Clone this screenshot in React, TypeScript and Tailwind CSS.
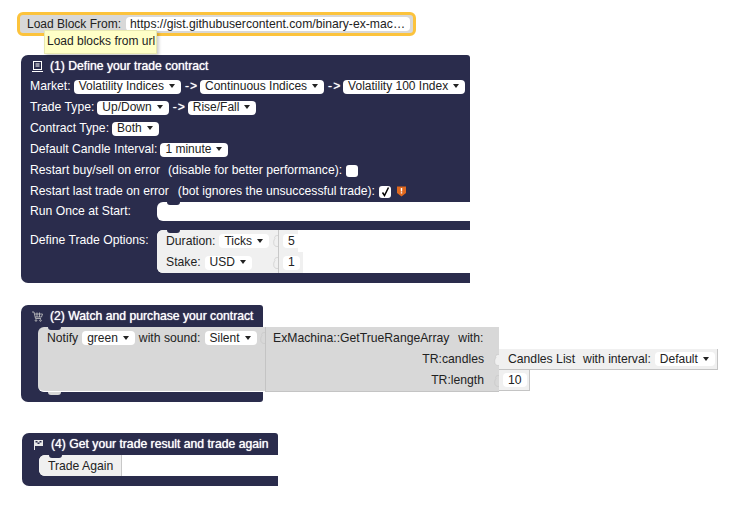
import type { ReactNode } from 'react'

const navy = 'bg-[#2a2c4c]'

function Caret() {
  return <span className="ml-[5px] inline-block h-0 w-0 border-x-[3.5px] border-t-[4px] border-x-transparent border-t-[#222]" />
}

function Dropdown({ label, className = '' }: { label: string; className?: string }) {
  return (
    <span className={`inline-flex h-[14px] shrink-0 items-center rounded-[4px] bg-white pb-[1px] pl-[5px] pr-[6px] text-[12px] text-[#222] ${className}`}>
      {label}
      <Caret />
    </span>
  )
}

function NumberField({ value }: { value: string }) {
  return <span className="inline-flex h-[14px] items-center rounded-[4px] bg-white px-[5px] text-[#222]">{value}</span>
}

// the little notch every statement block has on its top edge
function TopNotch() {
  return <span className={`absolute top-0 left-[10px] h-[3px] w-[13px] rounded-b-[6px] ${navy}`} />
}

// value input socket, the puzzle tab drawn at the right side of a block
function Socket({ color = '#f0f0f0' }: { color?: string }) {
  return (
    <svg width="5" height="12" viewBox="0 0 5 12" className="shrink-0">
      <path d="M5 0.5 C2 0.5 1 2 2 3.5 C0.5 5 0.5 8 1 9.5 C2 11.5 3 11.5 5 11.5" fill={color} stroke="#c6c6c6" strokeWidth="0.6" />
    </svg>
  )
}

function Row({ children }: { children: ReactNode }) {
  return <div className="flex h-[21px] items-center whitespace-nowrap pl-[9px] text-white">{children}</div>
}

function Header({ icon, title }: { icon: ReactNode; title: string }) {
  return (
    <div className="flex h-[21px] items-center whitespace-nowrap pl-[11px] pt-[1px] text-white [text-shadow:0_0_1px_#fff]">
      <span className="flex w-[18px] shrink-0 items-center">{icon}</span>
      {title}
    </div>
  )
}

function ListIcon() {
  return (
    <svg width="11" height="11" viewBox="0 0 11 11" fill="none" stroke="#fff" strokeWidth="1">
      <rect x="1.5" y="0.5" width="8" height="8" />
      <path d="M3.5 3h4M3.5 5h4M0 10.5h11" />
    </svg>
  )
}

function CartIcon() {
  return (
    <svg width="11" height="11" viewBox="0 0 11 11" fill="none" stroke="#c8c8c8" strokeWidth="0.8">
      <path d="M0 1h2l1.5 6.5h5.5M2.5 3h8L9.5 6H3.2M5 1.5v4.5M7.5 1.5v4.5" />
      <circle cx="4" cy="9.5" r="0.8" />
      <circle cx="8.5" cy="9.5" r="0.8" />
    </svg>
  )
}

function FlagIcon() {
  return (
    <svg width="11" height="11" viewBox="0 0 11 11">
      <path d="M1 1h9v6H2v4H1z" fill="#e8e8e8" />
      <path d="M2.5 2h2v1.5h-2zM6.5 2h2v1.5h-2zM4.5 3.5h2V5h-2z" fill="#2a2c4c" />
    </svg>
  )
}

function Checkbox({ checked = false }: { checked?: boolean }) {
  return (
    <span className="ml-[4px] flex h-[12px] w-[12px] items-center justify-center rounded-[3px] bg-white">
      {checked && (
        <svg width="9" height="10" viewBox="0 0 9 10" fill="none" stroke="#000" strokeWidth="1.5">
          <path d="M1.5 5.5 L3.5 8.5 L7.5 0.5" />
        </svg>
      )}
    </span>
  )
}

function Warning() {
  return (
    <svg width="9" height="11" viewBox="0 0 9 11" className="ml-[6px]">
      <path d="M0 0.5h9v6.5L4.5 10.5 0 7z" fill="#e0691f" />
      <path d="M3.8 2h1.4v3.5H3.8zM3.8 6.2h1.4v1.3H3.8z" fill="#fff" />
    </svg>
  )
}

function Arrow() {
  return <span className="ml-[4px] mr-[2px] w-[13px] tracking-[1px] [text-shadow:0_0_1px_#fff]">-&gt;</span>
}

function DefineBlock() {
  return (
    <div className={`w-[449px] rounded-l-[7px] rounded-tr-[3px] ${navy} pb-[10px]`}>
      <Header icon={<ListIcon />} title="(1) Define your trade contract" />
      <Row>
        Market:
        <Dropdown label="Volatility Indices" className="ml-[3px]" />
        <Arrow />
        <Dropdown label="Continuous Indices" />
        <Arrow />
        <Dropdown label="Volatility 100 Index" />
      </Row>
      <Row>
        Trade Type:
        <Dropdown label="Up/Down" className="ml-[3px]" />
        <Arrow />
        <Dropdown label="Rise/Fall" />
      </Row>
      <Row>
        Contract Type:
        <Dropdown label="Both" className="ml-[3px]" />
      </Row>
      <Row>
        Default Candle Interval:
        <Dropdown label="1 minute" className="ml-[3px]" />
      </Row>
      <Row>
        Restart buy/sell on error
        <span className="ml-[8px]">(disable for better performance):</span>
        <Checkbox />
      </Row>
      <Row>
        Restart last trade on error
        <span className="ml-[9px]">(bot ignores the unsuccessful trade):</span>
        <Checkbox checked />
        <Warning />
      </Row>
      <div className="flex h-[19px] items-center text-white">
        <span className="w-[136px] pl-[9px]">Run Once at Start:</span>
        <div className="relative h-full flex-1 rounded-l-[6px] bg-white">
          <TopNotch />
        </div>
      </div>
      <div className="mt-[9px] flex h-[43px] text-white">
        <span className="w-[136px] pl-[9px] pt-[4px]">Define Trade Options:</span>
        <div className="flex flex-1 rounded-l-[6px] bg-white text-[#222]">
          <div className="relative flex w-[121px] flex-col rounded-l-[6px] bg-[#f0f0f0] pl-[9px]">
            <TopNotch />
            <div className="flex h-[22px] items-center">
              Duration:
              <Dropdown label="Ticks" className="ml-[4px]" />
              <span className="ml-auto"><Socket /></span>
            </div>
            <div className="flex h-[21px] items-center">
              Stake:
              <Dropdown label="USD" className="ml-[4px]" />
              <span className="ml-auto"><Socket /></span>
            </div>
          </div>
          <div className="flex flex-col items-start">
            <div className="flex h-[22px] w-[20px] items-center border-l border-[#c8c8c8] bg-[#f0f0f0] pl-[4px]">
              <NumberField value="5" />
            </div>
            <div className="flex h-[21px] w-[25px] items-center border-l border-[#c8c8c8] bg-[#f0f0f0] pl-[4px]">
              <NumberField value="1" />
            </div>
          </div>
        </div>
      </div>
    </div>
  )
}

function WatchBlock() {
  return (
    <div className={`mt-[22px] w-[242px] rounded-l-[7px] rounded-tr-[3px] rounded-br-[3px] ${navy} pb-[10px]`}>
      <Header icon={<CartIcon />} title="(2) Watch and purchase your contract" />
      <div className="ml-[17px] mt-[1px] flex h-[65px] w-max text-[#222]">
        <div className="relative flex w-[227px] items-start rounded-l-[6px] border-b border-white bg-[#d8d8d8] pl-[9px]">
          <TopNotch />
          <span className="absolute -bottom-[4px] left-[10px] h-[3px] w-[13px] rounded-b-[6px] bg-[#d8d8d8]" />
          <div className="flex h-[22px] w-full items-center whitespace-nowrap">
            Notify
            <Dropdown label="green" className="ml-[4px]" />
            <span className="ml-[4px]">with sound:</span>
            <Dropdown label="Silent" className="ml-[4px]" />
            <span className="ml-auto"><Socket color="#d8d8d8" /></span>
          </div>
        </div>
        <div className="flex w-[234px] flex-col border-l border-b border-[#c4c4c4] bg-[#d8d8d8]">
          <div className="flex h-[22px] items-center whitespace-nowrap pl-[7px]">
            ExMachina::GetTrueRangeArray
            <span className="ml-[9px]">with:</span>
          </div>
          <div className="flex h-[21px] items-center justify-end whitespace-nowrap pr-[10px]">
            TR:candles
            <span className="ml-[10px] -mr-[10px]"><Socket /></span>
          </div>
          <div className="flex h-[21px] items-center justify-end whitespace-nowrap pr-[10px]">
            TR:length
            <span className="ml-[10px] -mr-[10px]"><Socket color="#d8d8d8" /></span>
          </div>
        </div>
        <div className="flex flex-col items-start pt-[22px]">
          <div className="flex h-[21px] w-[219px] items-center whitespace-nowrap border-b border-r border-[#c4c4c4] bg-[#f0f0f0] pl-[9px]">
            Candles List
            <span className="ml-[8px]">with interval:</span>
            <Dropdown label="Default" className="ml-[4px]" />
          </div>
          <div className="flex h-[21px] w-[31px] items-center border-b border-r border-[#c4c4c4] bg-[#f0f0f0] pl-[4px]">
            <NumberField value="10" />
          </div>
        </div>
      </div>
    </div>
  )
}

function TradeAgainBlock() {
  return (
    <div className={`ml-[1px] mt-[31px] w-[256px] rounded-l-[7px] rounded-tr-[3px] ${navy} pb-[10px]`}>
      <Header icon={<FlagIcon />} title="(4) Get your trade result and trade again" />
      <div className="mt-[1px] ml-[17px] flex h-[21px] rounded-l-[6px] bg-white text-[#222]">
        <div className="relative flex w-[83px] items-center rounded-l-[6px] border-r border-[#c8c8c8] bg-[#f0f0f0] pl-[9px] pt-[1px]">
          <TopNotch />
          Trade Again
        </div>
      </div>
    </div>
  )
}

export default function App() {
  return (
    <div className="relative h-[513px] w-[747px] overflow-hidden bg-white pl-[21px] pt-[12px] font-['Liberation_Sans',Arial,sans-serif] text-[12.2px] leading-none">
      <div className="-ml-[4px] flex h-[24px] w-[399px] items-center whitespace-nowrap rounded-[6px] border-[3px] border-[#fcc33c] bg-[#d8d8d8] pl-[7px] text-[12px] text-[#222]">
        Load Block From:
        <span className="ml-[5px] flex h-[14px] w-[284px] items-center rounded-[4px] bg-white px-[4px] text-[12.2px]">
          https://gist.githubusercontent.com/binary-ex-mac…
        </span>
      </div>
      <div className="absolute left-[44px] top-[30px] z-10 flex h-[24px] w-[113px] items-center whitespace-nowrap border border-[#e8e8b0] bg-[#ffffc7] pb-[2px] pl-[2px] text-[12px] text-[#222] shadow-[2px_2px_3px_rgba(0,0,0,0.2)]">
        Load blocks from url
      </div>
      <div className="mt-[19px]">
        <DefineBlock />
        <WatchBlock />
        <TradeAgainBlock />
      </div>
    </div>
  )
}
